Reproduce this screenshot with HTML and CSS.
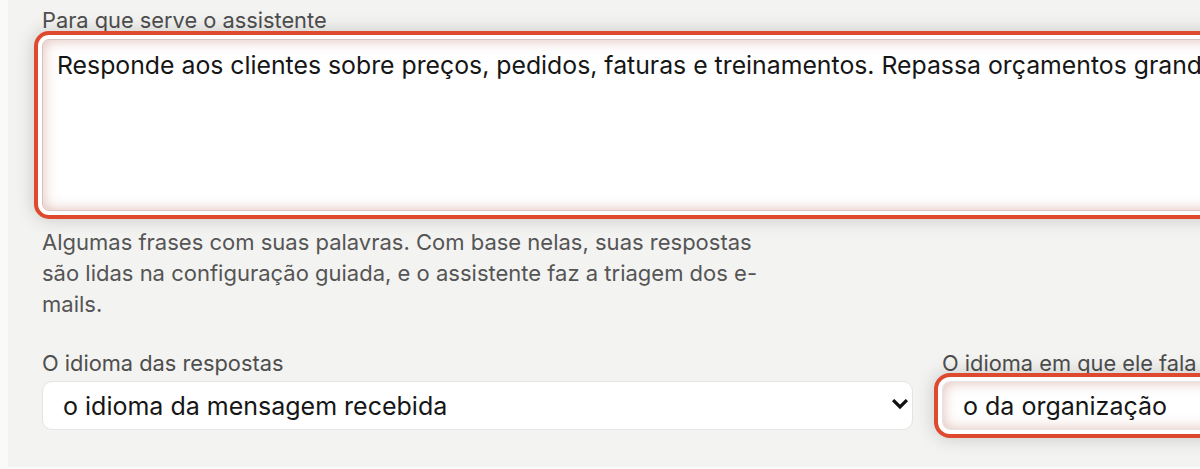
FILE: index.html
```html
<!DOCTYPE html>
<html lang="pt">
<head>
<meta charset="utf-8">
<link rel="stylesheet" href="styles.css">
</head>
<body>
<div class="page">
  <form class="form">
    <div class="field">
      <label class="label" for="purpose">Para que serve o assistente</label>
      <textarea id="purpose" class="textarea is-focus">Responde aos clientes sobre preços, pedidos, faturas e treinamentos. Repassa orçamentos grandes para a equipe comercial.</textarea>
      <p class="help">Algumas frases com suas palavras. Com base nelas, suas respostas são lidas na configuração guiada, e o assistente faz a triagem dos e-mails.</p>
    </div>
    <div class="row">
      <div class="field">
        <label class="label" for="lang1">O idioma das respostas</label>
        <div class="select-wrap">
          <select id="lang1" class="select">
            <option>o idioma da mensagem recebida</option>
          </select>
          <svg class="chev" width="16" height="11" viewBox="0 0 16 11"><path d="M2.2 2.2 L8 8 L13.8 2.2" fill="none" stroke="#111" stroke-width="3.2" stroke-linecap="square" stroke-linejoin="miter"/></svg>
        </div>
      </div>
      <div class="field">
        <label class="label" for="lang2">O idioma em que ele fala</label>
        <div class="select-wrap">
          <select id="lang2" class="select is-focus">
            <option>o da organização</option>
          </select>
          <svg class="chev" width="16" height="11" viewBox="0 0 16 11"><path d="M2.2 2.2 L8 8 L13.8 2.2" fill="none" stroke="#111" stroke-width="3.2" stroke-linecap="square" stroke-linejoin="miter"/></svg>
        </div>
      </div>
    </div>
  </form>
</div>
</body>
</html>
```
FILE: styles.css
```css
html, body {
  margin: 0;
  padding: 0;
  background: #fafaf9;
  overflow: hidden;
}
.page {
  margin-left: 8px;
  height: 467px;
  background: #f3f3f1;
  padding: 7px 0 0 34px;
  box-sizing: border-box;
  width: 2000px;
  font-family: Inter, "Noto Sans", sans-serif;
}
.form {
  width: 1771px;
}
.field {
  display: flex;
  flex-direction: column;
}
.label {
  font-size: 21.8px;
  line-height: 27px;
  color: #4e4e4e;
  margin-bottom: 5px;
}
.textarea {
  box-sizing: border-box;
  width: 100%;
  height: 172px;
  resize: none;
  font-family: Inter, "Noto Sans", sans-serif;
  font-size: 24.8px;
  line-height: 32px;
  color: #161616;
  padding: 9px 14px;
  border: 1px solid #dcdcda;
  border-radius: 7px;
  background: #fff;
  white-space: nowrap;
  overflow: hidden;
  outline: none;
}
.is-focus {
  border-color: #d8c4c0;
  box-shadow:
    inset 0 0 14px rgba(170, 70, 50, 0.36),
    0 0 0 4px #ffffff,
    0 0 0 8px #de4a2e,
    0 0 18px 9px rgba(0, 0, 0, 0.16);
}
.help {
  margin: 16px 0 0;
  max-width: 748px;
  font-size: 22px;
  line-height: 31px;
  color: #555;
}
.row {
  display: grid;
  grid-template-columns: 871px 871px;
  column-gap: 29px;
  margin-top: 30px;
}
.row .label {
  margin-bottom: 4px;
}
.select-wrap {
  position: relative;
}
.select {
  appearance: none;
  -webkit-appearance: none;
  box-sizing: border-box;
  width: 100%;
  height: 49px;
  padding: 0 40px 0 20px;
  font-family: Inter, "Noto Sans", sans-serif;
  font-size: 25px;
  color: #161616;
  background: #fff;
  border: 1px solid #e4e4e2;
  border-radius: 10px;
  outline: none;
}
.select.is-focus {
  border-radius: 8px;
}
.chev {
  position: absolute;
  right: 5px;
  top: 18px;
  pointer-events: none;
}
```
